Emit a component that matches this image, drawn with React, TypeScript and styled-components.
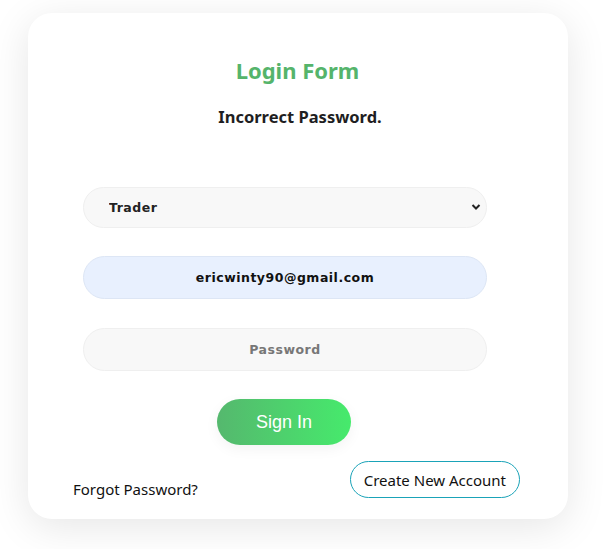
import React from "react";
import styled, { createGlobalStyle } from "styled-components";

const Global = createGlobalStyle`
  html, body { margin: 0; padding: 0; background: #ffffff; }
  * { box-sizing: border-box; }
`;

const Page = styled.div`
  width: 610px;
  height: 549px;
  padding: 13px 0 0 28px;
  overflow: hidden;
`;

const Card = styled.div`
  width: 540px;
  height: 506px;
  background: #fff;
  border-radius: 24px;
  box-shadow: 0 8px 40px rgba(0, 0, 0, 0.1);
  padding: 42px 48px 0 45px;
  display: flex;
  flex-direction: column;
`;

const Title = styled.h2`
  margin: 0;
  text-align: center;
  font-family: "Noto Sans", "Open Sans", sans-serif;
  font-weight: 700;
  font-size: 22px;
  line-height: 30px;
  color: #55b46b;
  padding-left: 2px;
`;

const Message = styled.p`
  margin: 20px 0 0;
  text-align: center;
  font-family: "Noto Sans", "Open Sans", sans-serif;
  font-weight: 700;
  font-size: 16.5px;
  line-height: 24px;
  color: #1e1e22;
  padding-left: 7px;
`;

const Form = styled.form`
  margin: 58px 0 0 10px;
  width: 404px;
  display: flex;
  flex-direction: column;
  align-items: center;
`;

const SelectWrap = styled.div`
  position: relative;
  width: 100%;
`;

const fieldFont = `
  font-family: "DejaVu Sans", sans-serif;
  font-weight: 700;
  font-size: 12.5px;
  letter-spacing: 0.5px;
`;

const Select = styled.select`
  appearance: none;
  width: 100%;
  height: 41px;
  border-radius: 21px;
  border: 1px solid #efefef;
  background: #f8f8f8;
  padding: 0 0 0 25px;
  color: #222;
  ${fieldFont}
  outline: none;
`;

const Chevron = styled.svg`
  position: absolute;
  right: 6px;
  top: 16px;
  width: 10px;
  height: 8px;
  pointer-events: none;
`;

const Input = styled.input<{ $filled?: boolean }>`
  width: 100%;
  height: 43px;
  margin-top: ${(p) => (p.$filled ? 28 : 29)}px;
  border-radius: 22px;
  border: 1px solid ${(p) => (p.$filled ? "#dde6f5" : "#efefef")};
  background: ${(p) => (p.$filled ? "#e8f0fe" : "#f8f8f8")};
  text-align: center;
  color: #111;
  ${fieldFont}
  outline: none;
  &::placeholder {
    color: #777;
  }
`;

const SignIn = styled.button`
  margin-top: 28px;
  margin-right: 2px;
  width: 134px;
  height: 46px;
  border: none;
  border-radius: 23px;
  background: linear-gradient(90deg, #55b86e 0%, #46ea6c 100%);
  color: #fff;
  font-family: "Liberation Sans", Arial, sans-serif;
  font-size: 18px;
  box-shadow: 0 4px 14px rgba(0, 0, 0, 0.05);
  cursor: pointer;
`;

const Footer = styled.div`
  margin-top: 16px;
  display: flex;
  justify-content: space-between;
  align-items: flex-end;
`;

const Forgot = styled.span`
  font-family: "Noto Sans", "Open Sans", sans-serif;
  font-size: 15px;
  line-height: 20px;
  color: #111;
  margin-bottom: -1px;
`;

const CreateBtn = styled.button`
  height: 37px;
  padding: 0 13px;
  border: 1px solid #1aa3b8;
  border-radius: 19px;
  background: #fff;
  font-family: "Noto Sans", "Open Sans", sans-serif;
  font-size: 15px;
  color: #111;
`;

export default function App() {
  return (
    <Page>
      <Global />
      <Card>
        <Title>Login Form</Title>
        <Message>Incorrect Password.</Message>
        <Form onSubmit={(e) => e.preventDefault()}>
          <SelectWrap>
            <Select defaultValue="Trader">
              <option>Trader</option>
              <option>Investor</option>
            </Select>
            <Chevron viewBox="0 0 10 8">
              <path d="M1.5 2 L5 5.5 L8.5 2" fill="none" stroke="#222" strokeWidth="2" />
            </Chevron>
          </SelectWrap>
          <Input $filled defaultValue="ericwinty90@gmail.com" />
          <Input type="password" placeholder="Password" />
          <SignIn type="submit">Sign In</SignIn>
        </Form>
        <Footer>
          <Forgot>Forgot Password?</Forgot>
          <CreateBtn type="button">Create New Account</CreateBtn>
        </Footer>
      </Card>
    </Page>
  );
}
